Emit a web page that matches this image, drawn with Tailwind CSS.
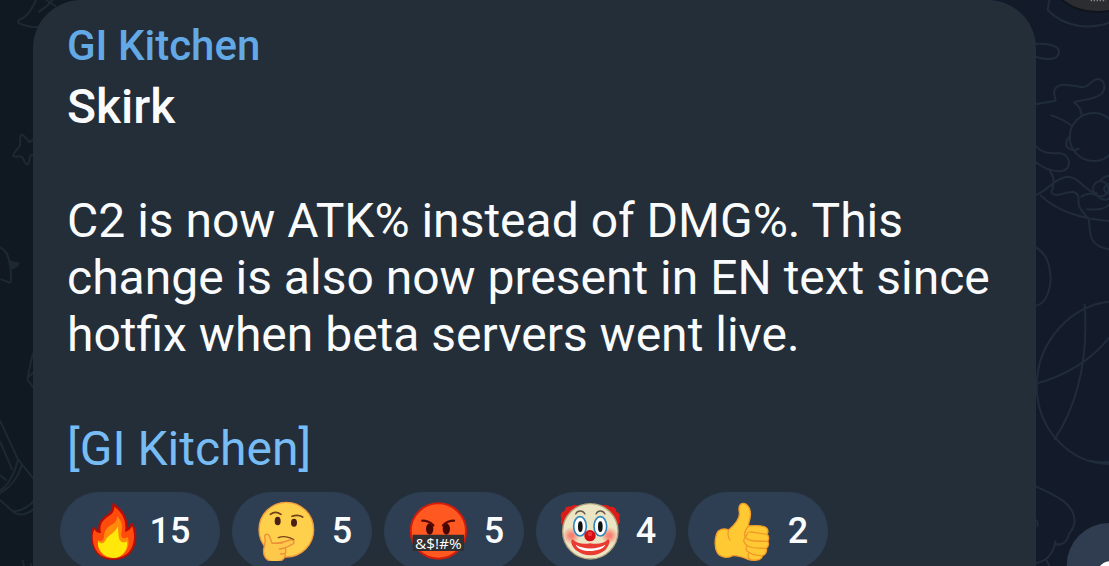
<!DOCTYPE html>
<html lang="en">
<head>
  <meta charset="UTF-8" />
  <meta name="viewport" content="width=device-width, initial-scale=1.0" />
  <title>GI Kitchen</title>
  <script src="https://cdn.jsdelivr.net/npm/@tailwindcss/browser@4"></script>
</head>
<body class="relative h-screen overflow-hidden bg-linear-to-r from-[#101921] to-[#131b2a] font-['Roboto',sans-serif] text-[#fafbfc]">

  <!-- Wallpaper doodles -->
  <svg class="absolute left-0 top-0 w-[60px] h-[566px]" viewBox="0 0 180 1698" fill="none" stroke="#1d2932" stroke-width="6" stroke-linecap="round" stroke-linejoin="round" aria-hidden="true">
    <path d="M108 0C98 22 88 38 76 49C68 57 52 59 54 66C60 75 90 82 118 82M117 35L142 17L150 8L166 18M140 0L150 8L158 0" />
    <path d="M100 420L88 426C78 416 69 399 62 406C57 414 65 433 57 441C49 451 37 462 40 468C46 473 58 467 65 470C72 478 75 493 82 494C88 492 88 473 92 466L104 464" />
    <path d="M0 742C22 750 34 786 33 840C32 852 28 848 20 844L4 838" />
    <path d="M30 784C40 792 48 785 56 790C54 800 40 806 32 805Z" fill="#1d2932" />
    <path d="M100 1060C92 1080 88 1110 82 1138L104 1168M86 1130L102 1116" />
    <path d="M0 1262L54 1378L102 1438M0 1324L36 1408M54 1378C44 1424 22 1458 0 1472M66 1394C54 1434 28 1464 0 1480M0 1426L18 1440M0 1500L38 1534C58 1552 86 1542 104 1524M38 1534C66 1534 86 1520 104 1500" />
    <path d="M68 1682L72 1698M92 1692L94 1698" />
  </svg>
  <svg class="absolute right-0 top-0 w-[109px] h-[566px]" viewBox="0 0 327 1698" fill="none" stroke="#202c3c" stroke-width="6" stroke-linecap="round" stroke-linejoin="round" aria-hidden="true">
    <path d="M148 0L143 30C190 78 260 92 327 68" />
    <path d="M106 132C136 130 176 134 177 155C176 182 142 180 106 170" />
    <path d="M106 313L166 302C170 292 158 285 163 273C170 246 204 254 238 260C266 268 272 238 294 237C314 240 320 266 304 282C284 300 244 298 222 307C238 318 244 330 245 346M154 346C178 354 198 362 215 378" />
    <circle cx="281" cy="411" r="72" />
    <path d="M210 410C196 420 194 440 208 446C218 452 226 452 236 446" />
    <path d="M104 434C126 462 152 460 180 460C216 466 216 510 182 514C146 514 124 502 104 484M150 514C170 540 158 566 154 576C168 598 196 572 220 576C242 582 234 604 236 612C240 632 256 644 266 656C272 700 262 736 327 748M104 586C140 576 160 536 200 530C240 530 250 572 290 580M122 586C170 634 250 658 327 663M262 628C286 628 310 632 327 614M244 590C266 574 290 582 300 594C312 602 320 600 327 596" />
    <circle cx="302" cy="566" r="23" />
    <path d="M300 544C308 532 316 528 327 528M327 552C314 556 308 566 316 576L327 582" />
    <path d="M104 740C140 760 150 790 152 840C148 880 134 914 104 918" />
    <path d="M327 905C220 914 110 1020 110 1160C112 1290 210 1390 327 1392M254 914C264 1060 240 1200 164 1318M112 1150C200 1126 270 1084 327 1014M270 1382C292 1388 310 1388 327 1386" />
    <path d="M104 1457C160 1486 220 1504 224 1562C222 1596 204 1594 204 1612C194 1634 180 1634 168 1634L166 1624C160 1664 140 1684 104 1690M108 1560C114 1566 114 1572 112 1578M140 1682L148 1698" />
    <!-- Floating buttons cut off by the edge -->
    <ellipse cx="290" cy="-86" rx="146" ry="122" fill="#2b2d31" stroke="#10141d" stroke-width="6" />
    <path d="M272 1H318" stroke="#8b8e94" stroke-width="6" stroke-dasharray="4 5" stroke-linecap="butt" />
    <circle cx="327" cy="1696" r="127" fill="#303d50" stroke="none" />
    <path d="M300 1698Q310 1686 327 1684V1698Z" fill="#fff" stroke="none" />
  </svg>

  <main class="relative ml-[33px] mr-[73px] min-h-screen rounded-t-[48px] bg-[#232e39] px-[34px] pt-[17px]">
    <h1 class="mb-1 text-[42px] leading-[57px] font-medium text-[#62a9e5]">GI Kitchen</h1>

    <article class="text-[48px] leading-[57px]">
      <h2 class="mb-[57px] font-medium">Skirk</h2>
      <p class="mb-[57px]">C2 is now ATK% instead of DMG%. This change is also now present in EN text since hotfix when beta servers went live.</p>
      <a href="#" class="block w-fit text-[#77bcf5]">[GI Kitchen]</a>
    </article>

    <!-- Reactions -->
    <div class="-ml-[7px] mt-[15px] flex gap-3 text-[36px] font-medium">
      <button type="button" class="flex h-[78px] items-center gap-1 rounded-full bg-[#2e3f53] pl-6 pr-7" aria-label="Fire, 15">
        <svg class="size-[60px]" viewBox="102 63 180 180" aria-hidden="true">
          <path d="M187 68C208 78 234 104 233 144C238 140 243 132 244 124C257 142 263 166 256 190C250 222 224 240 190 240C154 240 132 222 126 190C121 168 124 150 131 139C136 144 139 149 145 150C142 124 160 112 176 100C186 91 187 80 187 68Z" fill="#b70d05" />
          <path d="M193 80C212 94 231 116 225 156C236 153 243 147 246 138C255 160 254 188 243 207C232 226 212 235 190 235C163 235 143 224 135 204C126 184 126 162 133 148C139 158 145 160 153 159C146 130 162 118 180 106C190 99 193 90 193 80Z" fill="#ff4b0b" />
          <path d="M201 108C216 123 219 139 214 158C211 171 221 181 233 171C242 190 232 231 190 234C150 230 140 205 144 180C152 187 160 181 162 172C162 145 178 139 189 132C198 126 202 118 201 108Z" fill="#ff8b0b" />
          <path d="M203 139C207 157 203 171 211 182C217 190 226 187 231 184C235 207 220 233 190 234C158 232 142 208 144 184C150 193 160 191 166 182C174 165 198 158 203 139Z" fill="#ffe80a" />
        </svg>
        <span class="w-11 text-center">15</span>
      </button>
      <button type="button" class="flex h-[78px] items-center gap-1 rounded-full bg-[#2e3f53] pl-6 pr-2" aria-label="Thinking, 5">
        <svg class="size-[60px]" viewBox="93 63 180 180" fill="none" stroke-linecap="round" stroke-linejoin="round" aria-hidden="true">
          <circle cx="184" cy="149" r="82" fill="#fed04c" stroke="#f39a3b" stroke-width="4" />
          <ellipse cx="158" cy="123" rx="9" ry="13" fill="#482015" />
          <ellipse cx="207" cy="128" rx="9" ry="12" fill="#482015" />
          <path d="M136 103C146 95 157 95 168 103M201 109C212 105 223 105 233 111" stroke="#714018" stroke-width="5" />
          <path d="M160 173C174 167 193 170 206 179" stroke="#7c461d" stroke-width="4" />
          <path d="M120 176C117 164 123 160 130 164C138 170 136 183 142 190C157 191 177 186 195 180C206 178 212 187 202 193L180 204C184 211 184 216 180 221C184 235 169 246 148 246C124 244 113 230 116 207C119 195 122 187 120 176Z" fill="#fec94a" stroke="#ed903b" stroke-width="4" />
          <path d="M142 190L172 189M181 204L163 207M180 221L166 222" stroke="#ed903b" stroke-width="4" />
        </svg>
        <span class="w-11 text-center">5</span>
      </button>
      <button type="button" class="flex h-[78px] items-center gap-1 rounded-full bg-[#2e3f53] pl-6 pr-2" aria-label="Cursing, 5">
        <svg class="size-[60px]" viewBox="84 63 180 180" fill="none" stroke-linecap="round" aria-hidden="true">
          <circle cx="175" cy="153" r="83" fill="#ff5921" stroke="#d31c0c" stroke-width="6" />
          <ellipse cx="149" cy="147" rx="11" ry="17" fill="#450704" />
          <ellipse cx="199" cy="147" rx="11" ry="17" fill="#450704" />
          <path d="M127 122C139 122 152 128 160 136M222 122C210 122 197 128 189 136" stroke="#5b0a04" stroke-width="7" />
          <path d="M98 164H252V213H98Z" fill="#302f31" />
          <text x="175" y="206" text-anchor="middle" font-family="Open Sans, sans-serif" font-size="46" font-weight="500" fill="#fff">&amp;$!#%</text>
        </svg>
        <span class="w-11 text-center">5</span>
      </button>
      <button type="button" class="flex h-[78px] items-center gap-1 rounded-full bg-[#2e3f53] pl-6 pr-2" aria-label="Clown, 4">
        <svg class="size-[60px]" viewBox="90 63 180 180" fill="none" stroke-linecap="round" stroke-linejoin="round" aria-hidden="true">
          <defs>
            <radialGradient id="cheek">
              <stop offset="0.2" stop-color="#f88070" />
              <stop offset="1" stop-color="#f88070" stop-opacity="0" />
            </radialGradient>
          </defs>
          <path d="M150 78C138 73 127 75 122 80C109 77 104 84 104 93C92 96 89 108 95 116C90 125 94 134 102 138H260C268 133 273 124 267 115C272 106 268 98 259 96C260 85 251 78 240 81C232 74 221 74 210 78Z" fill="#dc1d17" />
          <circle cx="181" cy="154" r="83" fill="#ece5c3" stroke="#b3a47e" stroke-width="4" />
          <circle cx="124" cy="167" r="26" fill="url(#cheek)" />
          <circle cx="238" cy="167" r="26" fill="url(#cheek)" />
          <path d="M137 102C142 90 159 90 165 102M198 102C203 90 219 90 225 102" stroke="#655b4c" stroke-width="4" />
          <ellipse cx="150" cy="139" rx="19" ry="29" fill="#fff" stroke="#3187bc" stroke-width="5" />
          <ellipse cx="211" cy="139" rx="19" ry="29" fill="#fff" stroke="#3187bc" stroke-width="5" />
          <ellipse cx="151" cy="140" rx="7" ry="16" fill="#111" />
          <ellipse cx="211" cy="140" rx="7" ry="16" fill="#111" />
          <path d="M128 178C142 193 163 193 181 190C199 193 220 193 234 178C244 181 236 199 226 210C200 231 163 231 137 210C124 198 120 181 128 178Z" fill="#e93b32" />
          <path d="M137 194C163 209 200 209 226 194C217 217 147 221 137 194Z" fill="#fff" />
          <circle cx="180" cy="167" r="17" fill="#d40d12" />
          <circle cx="180" cy="162" r="7" fill="#ee3838" />
        </svg>
        <span class="w-11 text-center">4</span>
      </button>
      <button type="button" class="flex h-[78px] items-center gap-1 rounded-full bg-[#2e3f53] pl-6 pr-2" aria-label="Thumbs up, 2">
        <svg class="size-[60px]" viewBox="96 63 180 180" fill="#fec933" stroke="#f29a29" stroke-width="4" stroke-linecap="round" stroke-linejoin="round" aria-hidden="true">
          <path d="M146 150C164 134 181 116 178 97C174 78 181 69 191 70C207 73 213 92 211 108C210 121 205 129 205 138C224 136 245 136 257 142C266 147 265 157 261 163C268 169 267 179 263 184C268 191 265 200 259 205C262 219 253 226 247 227C246 243 218 243 201 237C184 230 169 226 158 227C144 236 120 232 112 218C101 200 105 166 115 153C126 145 138 146 146 150Z" />
          <path d="M146 151C141 164 144 171 150 180M205 138C196 151 190 161 196 171C204 163 199 154 214 156L261 163M196 171C187 181 193 191 201 196C195 207 200 216 208 217C202 226 203 234 211 238M196 171C203 184 222 183 263 184M201 196C210 206 234 204 259 205M208 217C218 226 234 227 247 227" fill="none" />
        </svg>
        <span class="w-11 text-center">2</span>
      </button>
    </div>
  </main>
</body>
</html>
